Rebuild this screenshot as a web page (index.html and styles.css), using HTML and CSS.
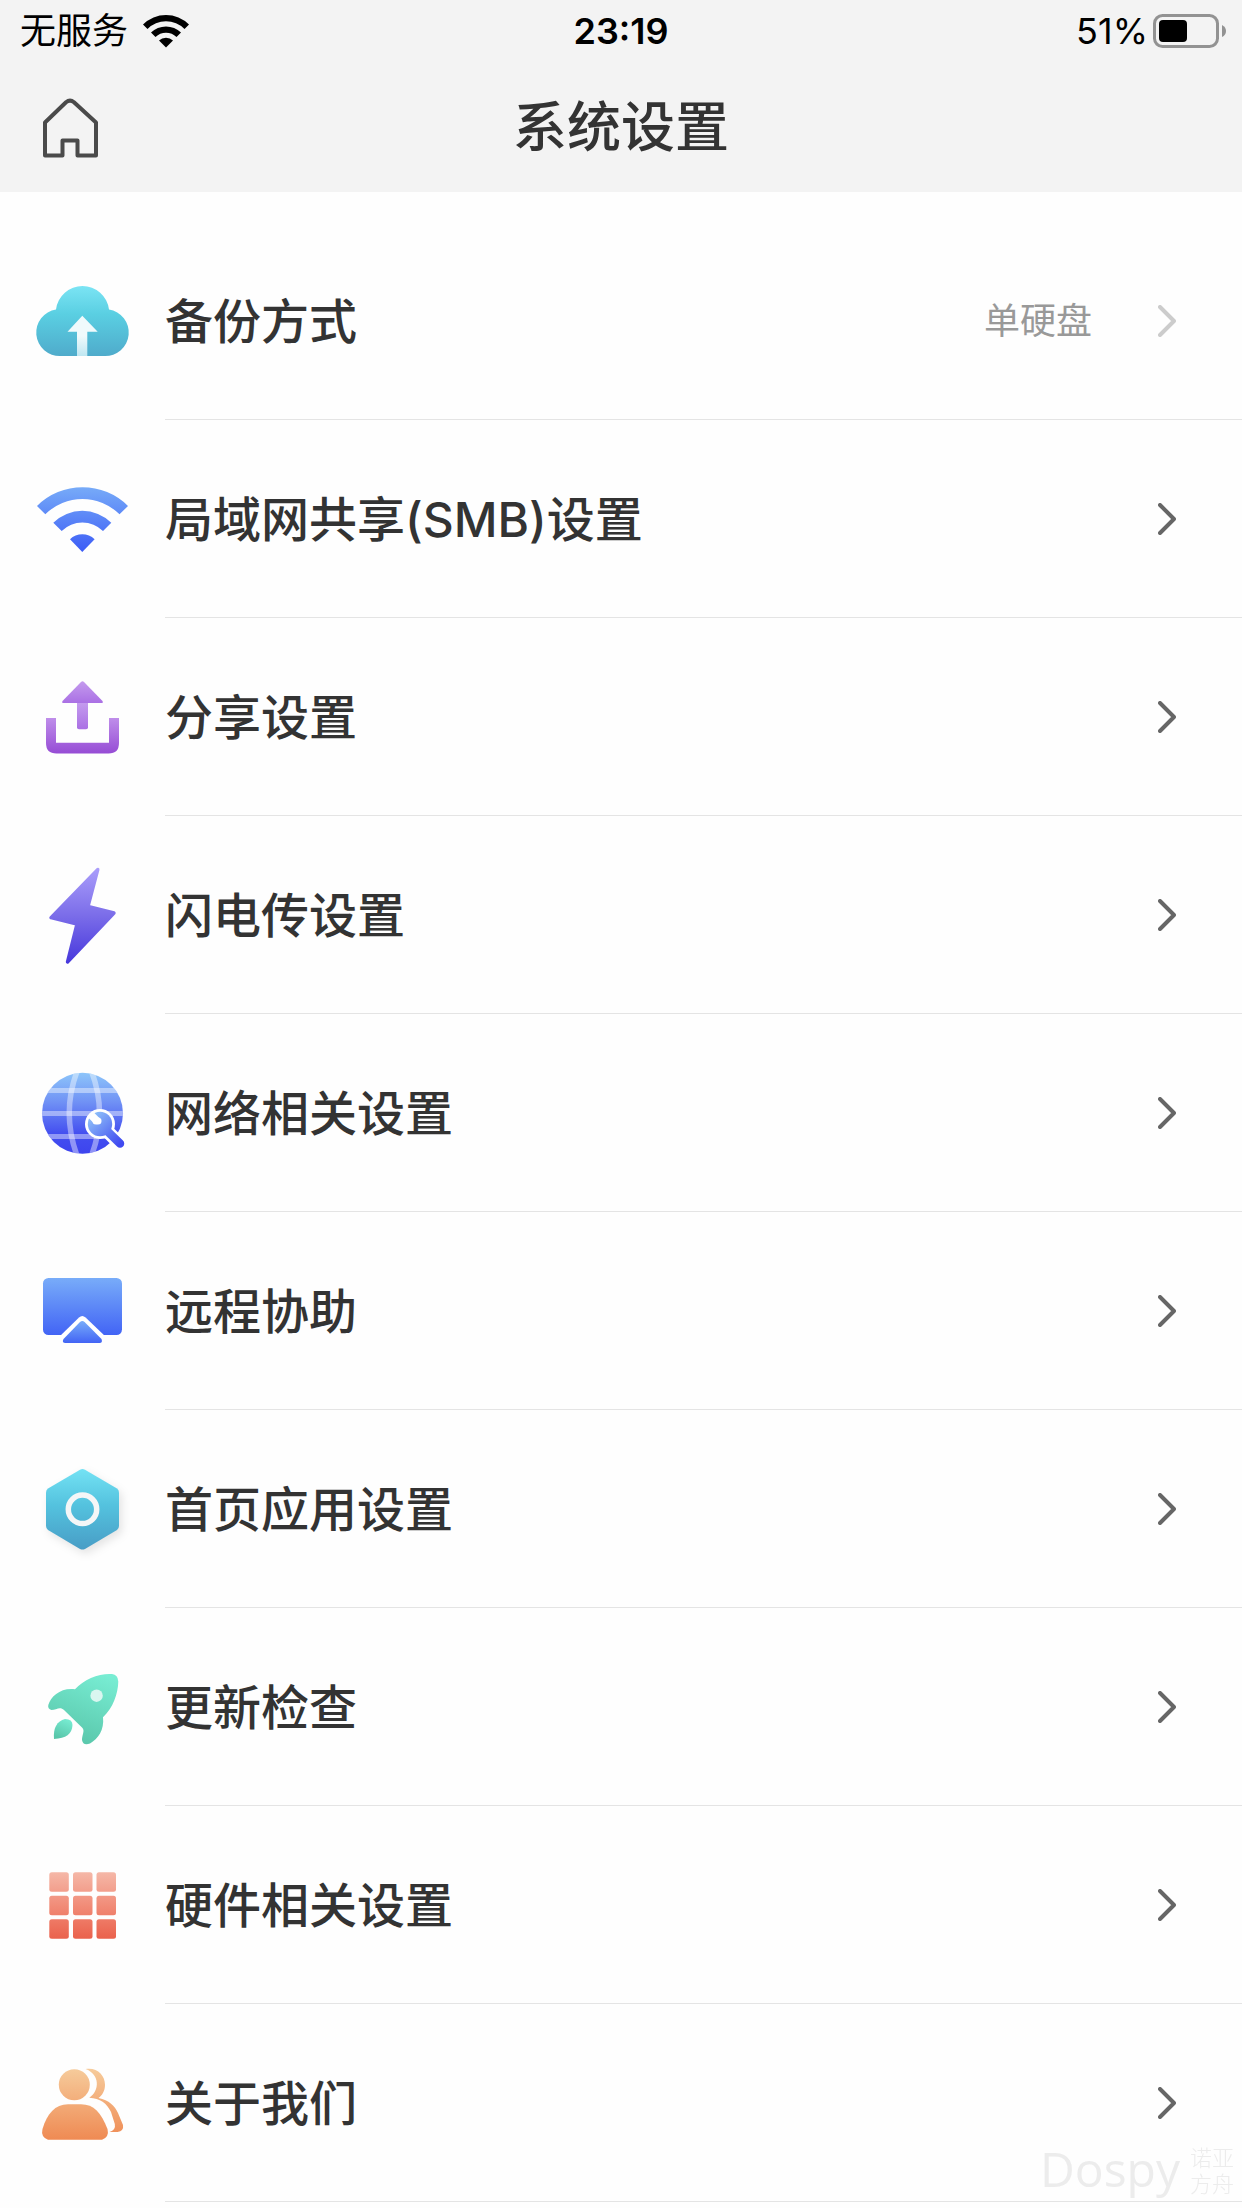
FILE: index.html
```html
<!DOCTYPE html>
<html lang="zh-CN">
<head>
    <meta charset="UTF-8">
    <meta name="viewport" content="width=device-width, initial-scale=1.0">
    <title>系统设置</title>
    <link rel="stylesheet" href="styles.css">
</head>
<body>

    <header class="header">
        <div class="status-bar">
            <div class="status-left">
                <span>无服务</span>
                <svg width="46" height="34" viewBox="0 0 46 34">
                    <path d="M0 10.500A32.500 32.500 0 0 1 46 10.500L41.500 15A26.200 26.200 0 0 0 4.500 15Z"/>
                    <path d="M8 18.500A21.500 21.500 0 0 1 38 18.500L33.500 23A15 15 0 0 0 12.500 23Z"/>
                    <path d="M16 26.500A10 10 0 0 1 30 26.500L23 33.500Z"/>
                </svg>
            </div>
            <div class="status-time">23:19</div>
            <div class="status-right">
                <span>51%</span>
                <svg width="74" height="34" viewBox="0 0 74 34">
                    <rect x="1.500" y="1.500" width="63" height="31" rx="8" fill="none" stroke="#929292" stroke-width="3"/>
                    <rect x="6" y="6" width="28" height="22" rx="4"/>
                    <path d="M69 11q4 2 4 6t-4 6z" fill="#929292"/>
                </svg>
            </div>
        </div>
        <div class="nav-bar">
            <a class="home" href="#" aria-label="首页">
                <svg width="56" height="60" viewBox="0 0 56 60">
                    <path d="M3 24.500L24 4.200Q28 1 32 4.200L54 24.500V57.500H35.500V42.500H20.500V57.500H3Z" fill="none" stroke="#4a4a4a" stroke-width="4" stroke-linejoin="round"/>
                </svg>
            </a>
            <h1>系统设置</h1>
        </div>
    </header>

    <!-- 箭头 -->
    <svg class="defs" width="0" height="0">
        <symbol id="arrow" viewBox="0 0 18 32">
            <path d="M2 2L16 16L2 30" fill="none" stroke="currentColor" stroke-width="4" stroke-linecap="round" stroke-linejoin="round"/>
        </symbol>
    </svg>

    <ul class="list">
        <li>
            <a class="item" href="#">
                <svg class="icon" viewBox="0 0 105 105">
                    <defs>
                        <linearGradient id="cloud" x1="0" y1="0" x2="0" y2="1"><stop offset="0" stop-color="#7be4f4"/><stop offset=".4" stop-color="#5acfe2"/><stop offset="1" stop-color="#4fabcb"/></linearGradient>
                        <linearGradient id="cloudArrow" x1="0" y1="0" x2="0" y2="1"><stop offset=".5" stop-color="#f0fafc"/><stop offset="1" stop-color="#bfe7f2"/></linearGradient>
                    </defs>
                    <path d="M30.500 88A23.400 23.400 0 0 1 26 41.500A26.700 26.700 0 0 1 79 41.500A23.400 23.400 0 0 1 74.500 88Z" fill="url(#cloud)"/>
                    <path d="M52.300 47.700L67.700 63.700H57.300V88H47V63.700H37.500Z" fill="url(#cloudArrow)"/>
                </svg>
                <div class="content">
                    <span class="name">备份方式</span>
                    <span class="value">单硬盘</span>
                    <svg class="arrow light"><use href="#arrow"/></svg>
                </div>
            </a>
        </li>
        <li>
            <a class="item" href="#">
                <svg class="icon" viewBox="0 0 105 105">
                    <linearGradient id="wifi" gradientUnits="userSpaceOnUse" x1="0" y1="21" x2="0" y2="86"><stop offset="0" stop-color="#77abf8"/><stop offset="1" stop-color="#3c5cf6"/></linearGradient>
                    <g fill="url(#wifi)">
                        <path d="M7 40A64.500 64.500 0 0 1 98 40L89.500 48.300A52.700 52.700 0 0 0 15.300 48.300Z"/>
                        <path d="M23.300 56.700A41.300 41.300 0 0 1 81.300 56.700L73 65A29.400 29.400 0 0 0 31.700 65Z"/>
                        <path d="M40 73.300A17.500 17.500 0 0 1 64.600 73.300L52.300 86Z"/>
                    </g>
                </svg>
                <div class="content">
                    <span class="name">局域网共享(SMB)设置</span>
                    <svg class="arrow"><use href="#arrow"/></svg>
                </div>
            </a>
        </li>
        <li>
            <a class="item" href="#">
                <svg class="icon" viewBox="0 0 105 105">
                    <defs>
                        <linearGradient id="share" x1="0" y1="0" x2="0" y2="1"><stop offset="0" stop-color="#c49bee"/><stop offset="1" stop-color="#aa70e4"/></linearGradient>
                        <linearGradient id="tray" x1="0" y1="0" x2="0" y2="1"><stop offset="0" stop-color="#bf8eea"/><stop offset="1" stop-color="#964cd5"/></linearGradient>
                    </defs>
                    <path d="M47 39H58V63.500Q58 65.300 56 65.300H49Q47 65.300 47 63.500Z" fill="url(#share)"/>
                    <path d="M51 18Q52.500 16.700 54 18L72.500 37Q73.500 39 71.500 39H33.500Q31.500 39 32.500 37Z" fill="url(#share)"/>
                    <path d="M16 54H26V78.700H79V54H89V79Q89 89.500 78.500 89.500H26.500Q16 89.500 16 79Z" fill="url(#tray)"/>
                </svg>
                <div class="content">
                    <span class="name">分享设置</span>
                    <svg class="arrow"><use href="#arrow"/></svg>
                </div>
            </a>
        </li>
        <li>
            <a class="item" href="#">
                <svg class="icon" viewBox="0 0 105 105">
                    <linearGradient id="bolt" gradientUnits="userSpaceOnUse" x1="0" y1="5" x2="0" y2="102"><stop offset="0" stop-color="#ab9efb"/><stop offset=".5" stop-color="#7b6de9"/><stop offset="1" stop-color="#4637dc"/></linearGradient>
                    <path d="M67.800 7.500L21 55.700L47 62L37.500 100L84 51L58 44.500Z" fill="url(#bolt)" stroke="url(#bolt)" stroke-width="3.400" stroke-linejoin="round"/>
                </svg>
                <div class="content">
                    <span class="name">闪电传设置</span>
                    <svg class="arrow"><use href="#arrow"/></svg>
                </div>
            </a>
        </li>
        <li>
            <a class="item" href="#">
                <svg class="icon" viewBox="0 0 105 105">
                    <defs>
                        <linearGradient id="globe" x1="0" y1="0" x2="0" y2="1"><stop offset="0" stop-color="#8dc5fa"/><stop offset=".35" stop-color="#7193f5"/><stop offset=".75" stop-color="#444ff0"/><stop offset="1" stop-color="#3d44ee"/></linearGradient>
                        <linearGradient id="wrench" gradientUnits="userSpaceOnUse" x1="62" y1="54" x2="90" y2="84"><stop offset="0" stop-color="#8fc1f9"/><stop offset="1" stop-color="#404af0"/></linearGradient>
                        <clipPath id="globeClip"><circle cx="52.500" cy="53.300" r="40.500"/></clipPath>
                    </defs>
                    <circle cx="52.500" cy="53.300" r="40.500" fill="url(#globe)"/>
                    <g clip-path="url(#globeClip)" fill="none" stroke="#fff" stroke-opacity=".42" stroke-width="5">
                        <path d="M12 30.500H93M12 53.400H93M12 76.500H93"/>
                        <path d="M47.500 10Q31 53 47.500 97M61 10Q78 53 61 97" stroke-width="5.500"/>
                    </g>
                    <path d="M74 68L89.500 83.500" stroke="#fff" stroke-width="13.500"/>
                    <circle cx="70" cy="64" r="15" fill="#fff"/>
                    <path d="M72 66L90 83.500" stroke="url(#wrench)" stroke-width="8.500" stroke-linecap="round"/>
                    <circle cx="70" cy="64" r="12.200" fill="url(#wrench)"/>
                    <path d="M60 54L67.500 61.500" stroke="#fff" stroke-width="7.500"/>
                    <path d="M66 61L68 61" stroke="#fff" stroke-width="7" stroke-linecap="round"/>
                </svg>
                <div class="content">
                    <span class="name">网络相关设置</span>
                    <svg class="arrow"><use href="#arrow"/></svg>
                </div>
            </a>
        </li>
        <li>
            <a class="item" href="#">
                <svg class="icon" viewBox="0 0 105 105">
                    <linearGradient id="screen" x1="0" y1="0" x2="0" y2="1"><stop offset="0" stop-color="#78acf9"/><stop offset="1" stop-color="#4264f5"/></linearGradient>
                    <rect x="13" y="20" width="79" height="57" rx="5.500" fill="url(#screen)"/>
                    <path d="M29 79L49 59.500Q52.300 56.500 55.600 59.500L76 79Z" fill="#fff"/>
                    <path d="M50 64Q52.300 62 54.600 64L71.500 81Q73 85 69.500 85H35.500Q31.500 85 33.500 81Z" fill="url(#screen)"/>
                </svg>
                <div class="content">
                    <span class="name">远程协助</span>
                    <svg class="arrow"><use href="#arrow"/></svg>
                </div>
            </a>
        </li>
        <li>
            <a class="item" href="#">
                <svg class="icon icon-hex" viewBox="0 0 105 105">
                    <linearGradient id="hex" x1="0" y1="0" x2="0" y2="1"><stop offset="0" stop-color="#73e2f4"/><stop offset=".45" stop-color="#54c2de"/><stop offset="1" stop-color="#489dc6"/></linearGradient>
                    <path d="M50 13.700Q52.500 12.500 55 13.700L87 32.500Q89 34 89 36.500V70Q89 72.500 87 74L55 93Q52.500 94.200 50 93L18 74Q16 72.500 16 70V36.500Q16 34 18 32.500Z" fill="url(#hex)"/>
                    <circle cx="52.500" cy="53.300" r="14.200" fill="none" stroke="#f5f6f7" stroke-width="5.500"/>
                </svg>
                <div class="content">
                    <span class="name">首页应用设置</span>
                    <svg class="arrow"><use href="#arrow"/></svg>
                </div>
            </a>
        </li>
        <li>
            <a class="item" href="#">
                <svg class="icon" viewBox="0 0 105 105">
                    <linearGradient id="rocket" x1=".8" y1="0" x2=".4" y2="1"><stop offset="0" stop-color="#78edd3"/><stop offset="1" stop-color="#59c6aa"/></linearGradient>
                    <path d="M45 35.300C54 25 70 19 82 20Q88 20.500 88.300 27.500C88 40 83 54 73 63.300C74.500 76 68 85 60 89.500Q53 92 52 86C52 81 55 77 52.500 74L34 56C30 52 26 56 21.500 56Q17.500 55 18.300 51C21 42 31 33.500 45 35.300Z" fill="url(#rocket)"/>
                    <circle cx="66.600" cy="41.700" r="6.200" fill="#daf6f0"/>
                    <path d="M24 85C23 74 27 67 35 65Q42.500 65 42.500 71C42 80 36 84.500 24 85Z" fill="url(#rocket)"/>
                </svg>
                <div class="content">
                    <span class="name">更新检查</span>
                    <svg class="arrow"><use href="#arrow"/></svg>
                </div>
            </a>
        </li>
        <li>
            <a class="item" href="#">
                <svg class="icon" viewBox="0 0 105 105">
                    <linearGradient id="grid" gradientUnits="userSpaceOnUse" x1="0" y1="20" x2="0" y2="87"><stop offset="0" stop-color="#f5b8a8"/><stop offset=".5" stop-color="#f18c78"/><stop offset="1" stop-color="#ea614c"/></linearGradient>
                    <g fill="url(#grid)">
                        <rect x="19.300" y="20.300" width="19.500" height="19.500" rx="2.500"/>
                        <rect x="43" y="20.300" width="19.500" height="19.500" rx="2.500"/>
                        <rect x="66.500" y="20.300" width="19.500" height="19.500" rx="2.500"/>
                        <rect x="19.300" y="43.800" width="19.500" height="19.500" rx="2.500"/>
                        <rect x="43" y="43.800" width="19.500" height="19.500" rx="2.500"/>
                        <rect x="66.500" y="43.800" width="19.500" height="19.500" rx="2.500"/>
                        <rect x="19.300" y="67.300" width="19.500" height="19.500" rx="2.500"/>
                        <rect x="43" y="67.300" width="19.500" height="19.500" rx="2.500"/>
                        <rect x="66.500" y="67.300" width="19.500" height="19.500" rx="2.500"/>
                    </g>
                </svg>
                <div class="content">
                    <span class="name">硬件相关设置</span>
                    <svg class="arrow"><use href="#arrow"/></svg>
                </div>
            </a>
        </li>
        <li>
            <a class="item" href="#">
                <svg class="icon" viewBox="0 0 105 105">
                    <linearGradient id="people" gradientUnits="userSpaceOnUse" x1="0" y1="19" x2="0" y2="90"><stop offset="0" stop-color="#f6cb9b"/><stop offset="1" stop-color="#ef8a53"/></linearGradient>
                    <g fill="url(#people)">
                        <circle cx="44.300" cy="34.700" r="15.500"/>
                        <path d="M12.500 79C17 64 25 54.300 38 54.300H51C64 54.300 71 63 77.500 79Q79.500 87 72 89.700H18Q10.500 87 12.500 79Z"/>
                        <path d="M55.500 19C67 17 75 25 75 34.700C75 41 72 45.500 68.500 48C79 50 85 56 88 63L93 75Q94 81 87.500 82H79.500Q86 80 84.800 74L81 62C77 53 70 48.500 59.300 47.700C70 41 70 24 55.500 19Z"/>
                    </g>
                </svg>
                <div class="content">
                    <span class="name">关于我们</span>
                    <svg class="arrow"><use href="#arrow"/></svg>
                </div>
            </a>
        </li>
    </ul>

    <div class="watermark">
        <span class="brand">Dospy</span>
        <span class="brand-cn">诺亚<br>方舟</span>
    </div>

</body>
</html>
```
FILE: styles.css
```css
* {
    box-sizing: border-box;
}
body {
    margin: 0;
    font-family: Inter, "Noto Sans CJK SC", sans-serif;
    background-color: #fefefe;
    color: #333;
}
svg {
    display: block;
    flex-shrink: 0;
}
.defs {
    position: absolute;
}
.header {
    background-color: #f3f3f3;
}
.status-bar {
    display: grid;
    grid-template-columns: 1fr auto 1fr;
    align-items: center;
    height: 60px;
    padding: 0 15px;
    font-size: 36px;
    line-height: 62px;
    color: #000;
}
.status-left, .status-right {
    display: flex;
    align-items: center;
}
.status-left {
    gap: 15px;
    padding-left: 5px;
}
.status-right {
    justify-content: flex-end;
    gap: 5px;
}
.status-time {
    font-weight: 600;
}
.nav-bar {
    display: grid;
    grid-template-columns: 1fr auto 1fr;
    align-items: center;
    height: 132px;
    padding: 4px 42px 0;
}
h1 {
    margin: 0;
    font-size: 54px;
    line-height: 80px;
    font-weight: 500;
}
.list {
    margin: 0;
    padding: 30px 0 0;
    list-style: none;
}
.item {
    display: flex;
    align-items: center;
    gap: 30px;
    padding-left: 30px;
    color: #333;
    text-decoration: none;
}
.icon {
    width: 105px;
    height: 105px;
    margin-bottom: 2px;
}
.icon-hex {
    filter: drop-shadow(3px 4px 4px rgba(0, 0, 0, 0.1));
}
.content {
    flex: 1;
    display: flex;
    align-items: center;
    height: 198px;
    padding-right: 66px;
    border-bottom: 1px solid #e4e4e4;
}
.name {
    flex: 1;
    padding-top: 2px;
    font-size: 48px;
    line-height: 72px;
    font-weight: 500;
}
.value {
    margin-right: 66px;
    font-size: 36px;
    line-height: 54px;
    color: #999;
}
.arrow {
    width: 18px;
    height: 32px;
    color: #666;
}
.arrow.light {
    color: #ccc;
}
.watermark {
    position: fixed;
    right: 8px;
    bottom: 9px;
    display: flex;
    align-items: center;
    gap: 10px;
    color: #ececec;
}
.brand {
    padding-bottom: 4px;
    font-family: "Open Sans", sans-serif;
    font-size: 48px;
    line-height: 52px;
}
.brand-cn {
    font-size: 22px;
    line-height: 26px;
    font-weight: 300;
}
```
